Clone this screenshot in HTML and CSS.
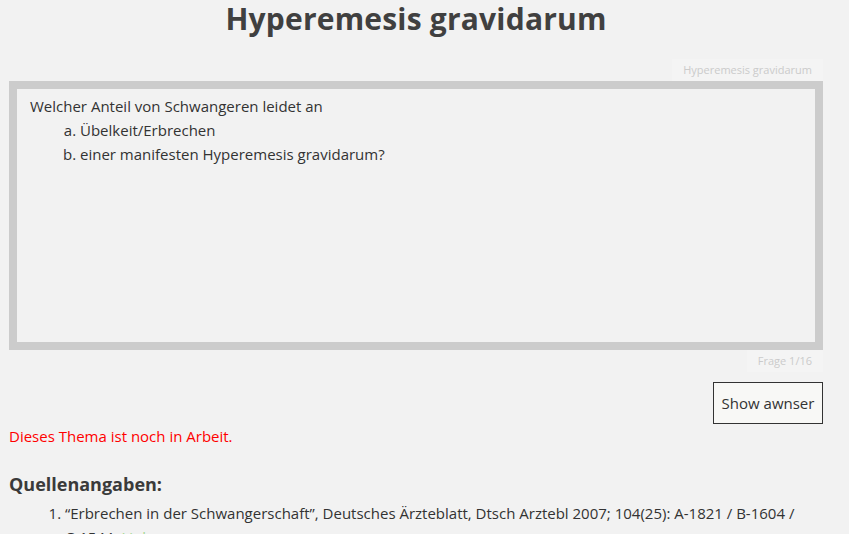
FILE: index.html
```html
<!DOCTYPE html>
<html lang="de">
<head>
<meta charset="utf-8">
<title>Hyperemesis gravidarum</title>
<link rel="stylesheet" href="styles.css">
</head>
<body>
<div class="page">
  <h1 class="title">Hyperemesis gravidarum</h1>
  <div class="meta meta-top"><span class="tag">Hyperemesis gravidarum</span></div>
  <div class="card">
    <p class="question">Welcher Anteil von Schwangeren leidet an</p>
    <ol class="sub" type="a">
      <li>Übelkeit/Erbrechen</li>
      <li>einer manifesten Hyperemesis gravidarum?</li>
    </ol>
  </div>
  <div class="meta meta-bottom"><span class="tag">Frage 1/16</span></div>
  <div class="actions"><button class="btn">Show awnser</button></div>
  <p class="notice">Dieses Thema ist noch in Arbeit.</p>
  <h2 class="sources-title">Quellenangaben:</h2>
  <ol class="sources">
    <li>“Erbrechen in der Schwangerschaft”, Deutsches Ärzteblatt, Dtsch Arztebl 2007; 104(25): A-1821 / B-1604 / <span class="nowrap">C-1544.</span> <a class="link" href="#">Link</a></li>
  </ol>
</div>
</body>
</html>
```
FILE: styles.css
```css
html, body {
  margin: 0;
  padding: 0;
  background: #f2f2f2;
}
body {
  font-family: "Open Sans", "Noto Sans", sans-serif;
  font-size: 15px;
  color: #333;
}
.page {
  width: 814px;
  margin-left: 9px;
}
.title {
  margin: 0;
  text-align: center;
  font-size: 30px;
  line-height: 38px;
  font-weight: 700;
  color: #404040;
  letter-spacing: 0.2px;
}
.meta {
  display: flex;
  justify-content: flex-end;
  font-size: 11px;
  color: #cbcbcb;
}
.meta-top {
  margin-top: 21px;
}
.tag {
  background: #f4f4f4;
  padding: 2px 11px 3px 11px;
  line-height: 17px;
}
.card {
  box-sizing: border-box;
  border: 8px solid #cccccc;
  height: 269px;
  padding: 2px 13px;
}
.question {
  margin: 3px 0 0 0;
  line-height: 24px;
}
.sub {
  margin: 0;
  padding-left: 50px;
  line-height: 24px;
}
.meta-bottom {
  margin-top: 0;
}
.actions {
  display: flex;
  justify-content: flex-end;
  margin-top: 10px;
}
.btn {
  font-family: inherit;
  font-size: 15px;
  color: #333;
  background: #f8f8f6;
  border: 1px solid #333;
  border-radius: 0;
  width: 110px;
  height: 42px;
  padding: 0;
}
.notice {
  margin: 1px 0 0 0;
  color: #ff0000;
  line-height: 22px;
}
.sources-title {
  margin: 25px 0 0 0;
  font-size: 18px;
  line-height: 24px;
  font-weight: 700;
  color: #3a3a3a;
}
.sources {
  margin: 5px 0 0 0;
  padding-left: 56px;
  line-height: 24px;
}
.nowrap {
  white-space: nowrap;
}
.link {
  color: #a6d88f;
  text-decoration: none;
}
```
